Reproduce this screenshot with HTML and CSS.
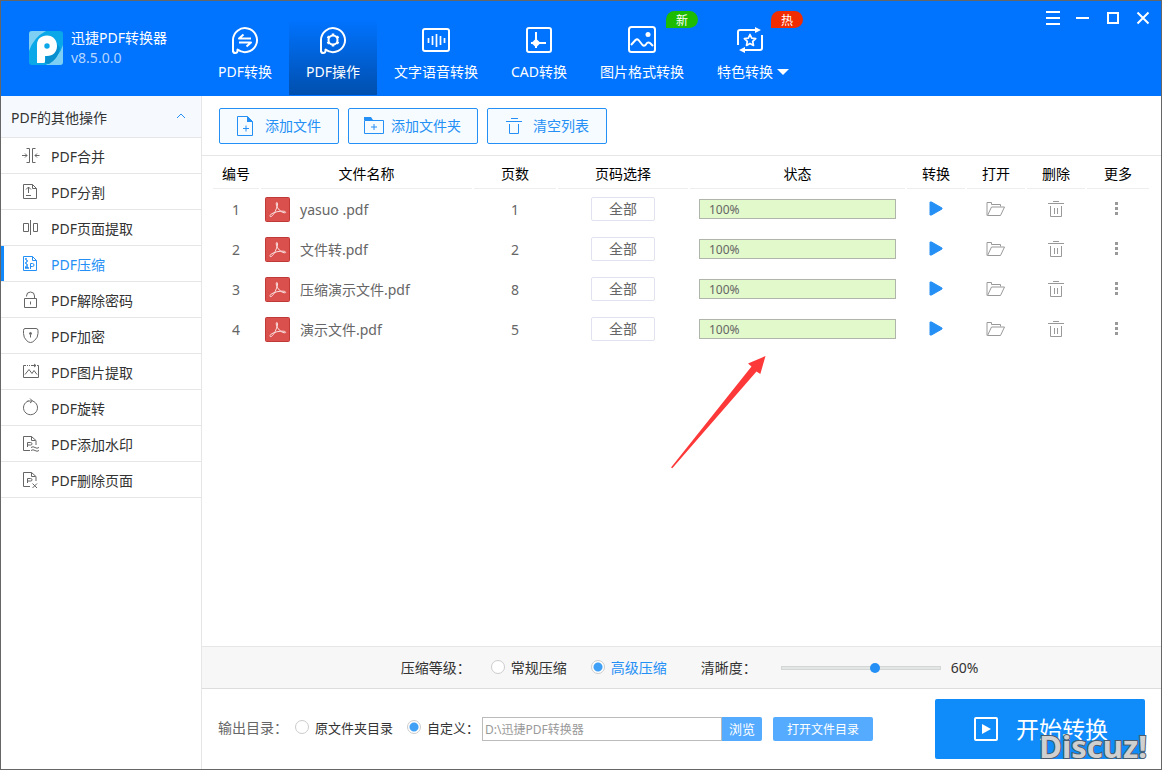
FILE: index.html
```html
<!DOCTYPE html>
<html lang="zh-CN">
<head>
<meta charset="utf-8">
<title>迅捷PDF转换器</title>
<link rel="stylesheet" href="styles.css">
</head>
<body>
<svg class="defs" aria-hidden="true">
  <symbol id="pdf" viewBox="0 0 25 25">
    <rect x=".5" y=".5" width="24" height="24" rx="1" fill="#d9504c" stroke="#c23a38"/>
    <path d="M11.300 5.800c.8-1 1.500.2 1.100 2.200-.7 3.800-3.300 9.600-5.800 11.300-1.700 1-2.400-.4-.7-2 2.700-2.200 9.500-3.600 13-3.100 2.600.5 2.100 1.900.2 1.600-3.300-.6-6.800-4.200-7.700-7.500-.2-1-.2-1.900-.1-2.500z" fill="none" stroke="#fbe3e2"/>
  </symbol>
  <symbol id="play" viewBox="0 0 14 15"><path d="M1 1v13h1.500L13 8V7L2.500 1z" fill="#2490f5" stroke="#2490f5" stroke-linejoin="round"/></symbol>
  <symbol id="folder" viewBox="0 0 19 15"><path d="M1 14.500v-13h4.500v2h9v2M1.500 14.500l4-8.500h13l-4 8.500z" fill="none" stroke="#999"/></symbol>
  <symbol id="trash" viewBox="0 0 16 16"><path d="M5 .5h6M0 2.500h16M2.500 5v10.500h11V5M6.500 7v6M9.500 7v6" fill="none" stroke="#999"/></symbol>
  <symbol id="dots" viewBox="0 0 3 13"><path d="M0 0h3v3H0zM0 5h3v3H0zM0 10h3v3H0z" fill="#999"/></symbol>
</svg>
<div class="app">
  <header class="header">
    <div class="brand">
      <svg class="logo" viewBox="0 0 34 34">
        <rect width="34" height="34" rx="3" fill="#0aa8e8"/>
        <path d="M0 20V3a3 3 0 0 1 3-3h14Q5 6 0 20zM34 14v17a3 3 0 0 1-3 3H17Q30 27 34 14z" fill="#7dd0f4"/>
        <path d="M16 32l1-7q10-2 11-12l3 4q-2 11-11 16z" fill="#078fcf"/>
        <path fill-rule="evenodd" d="M8 32V14C8 8 12 4.500 18 4.500S28 9 28 15s-4 10-10 10h-2v5.500q0 1.500-1.500 1.500zM18 12.300a2.700 2.700 0 1 0 0 5.400 2.700 2.700 0 0 0 0-5.400z" fill="#fff"/>
      </svg>
      <div class="brand-text"><span>迅捷PDF转换器</span><span class="version">v8.5.0.0</span></div>
    </div>
    <nav class="nav">
      <button class="tab">
        <svg viewBox="0 0 28 28"><path d="M2 26V14A12 12 0 1 1 6.500 23.500V25q-.2 2-2.200 2T2 25"/><path d="M12.500 8.500L8 12.500h12M8 16.500h12l-4.500 4"/></svg>
        <span>PDF转换</span></button>
      <button class="tab active">
        <svg viewBox="0 0 28 28"><path d="M2 26V14A12 12 0 1 1 6.500 23.500V25q-.2 2-2.200 2T2 25"/><circle cx="14" cy="14" r="4.500"/><path d="M14 7.500v2M14 18.500v2M8.400 10.700l1.700 1M17.900 16.300l1.700 1M8.400 17.300l1.700-1M17.900 11.700l1.700-1" stroke-width="2.500"/></svg>
        <span>PDF操作</span></button>
      <button class="tab">
        <svg viewBox="0 0 28 28"><rect x="1" y="3" width="26" height="22" rx="2"/><path d="M6.500 12v5M10.500 10v9M14.500 8v13M18.500 10v9M22.500 12v5" stroke-width="1.700"/></svg>
        <span>文字语音转换</span></button>
      <button class="tab">
        <svg viewBox="0 0 28 28"><rect x="2" y="2" width="24" height="24" rx="2"/><path d="M11 6v16M6 17h15"/><path d="M11 12.500l4.500 4.500-4.500 4.500L6.500 17z" fill="#fff" stroke="none"/></svg>
        <span>CAD转换</span></button>
      <button class="tab">
        <svg viewBox="0 0 28 28"><rect x="1" y="1" width="26" height="25" rx="2.500"/><path d="M3 19l4.500-5q1.500-1.200 3 0l4 5q1.500 1.500 3 0l1.500-2q1.500-1 3 0l3 3"/><circle cx="20" cy="8.500" r="2.500" fill="#fff" stroke="none"/></svg>
        <span>图片格式转换</span><b class="badge new">新</b></button>
      <button class="tab special">
        <svg viewBox="0 0 28 28"><path d="M2 19V6q0-2 2-2h16M26 9v13q0 2-2 2H8"/><path d="M19 1l6 3-6 3zM9 21l-6 3 6 3z" fill="#fff" stroke="none"/><path d="M14 8.500l1.700 3.700 4 .5-3 2.700.8 4-3.500-2-3.500 2 .8-4-3-2.700 4-.5z" stroke-width="1.700"/></svg>
        <span>特色转换<i class="caret"></i></span><b class="badge hot">热</b></button>
    </nav>
    <div class="window-controls">
      <button aria-label="菜单"><svg viewBox="0 0 14 14"><path d="M0 1h14M0 7h14M0 13h14"/></svg></button>
      <button aria-label="最小化"><svg viewBox="0 0 14 14"><path d="M0 7h13"/></svg></button>
      <button aria-label="最大化"><svg viewBox="0 0 14 14"><path d="M2 2h10v10H2z"/></svg></button>
      <button aria-label="关闭"><svg viewBox="0 0 14 14"><path d="M1.500 1.500l11 11M12.500 1.500l-11 11"/></svg></button>
    </div>
  </header>
  <div class="content">
    <aside class="sidebar">
      <button class="side-head"><span>PDF的其他操作</span><svg viewBox="0 0 10 6"><path d="M1 5l4-4 4 4"/></svg></button>
      <nav class="side-list">
        <button><svg viewBox="0 0 18 18"><path d="M0 8.500h5M3 6.500l2 2-2 2M4.500 1.500h3v14h-3M13.500 1.500h-3v14h3M17.500 8.500H13M15 6.500l-2 2 2 2"/></svg>PDF合并</button>
        <button><svg viewBox="0 0 18 18"><path d="M1.500 1.500h9l4 4v10h-13zM10.500 1.500v4h4M6.500 4v6M4 6.500L6.500 4 9 6.500M4 12.500h5"/></svg>PDF分割</button>
        <button><svg viewBox="0 0 18 18"><path d="M1.500 4.500h5v8h-5zM8.500 1v15M11.500 4.500h4v8h-4z"/></svg>PDF页面提取</button>
        <button class="active"><svg viewBox="0 0 18 18"><path d="M1.500 1.500h9l4 4v10h-13zM10.500 1.500v4h4M8.500 14V8.500h2q1.500 0 1.500 1.500t-1.500 1.500h-2"/><path d="M3 4h2M4 6h2M3 8h2M4 10h2M3 12h3M3 13h4" stroke-width="1.300"/></svg>PDF压缩</button>
        <button><svg viewBox="0 0 18 18"><path d="M2.500 7.500h12v9h-12zM4.500 5.500V5q0-4 4-4t4 4v2.500M8.500 10.500v3"/></svg>PDF解除密码</button>
        <button><svg viewBox="0 0 18 18"><path d="M3 1.500h11q2 0 2 2v3q0 4-3.500 7-2 2-4 2t-4-2Q1.500 10.500 1.500 6.500v-3q0-2 1.500-2z"/><path d="M8.500 8v2.500"/><circle cx="8.500" cy="6.500" r="1" fill="currentColor"/></svg>PDF加密</button>
        <button><svg viewBox="0 0 18 18"><path d="M4 2.500H1.500v12h15v-12H15M3 11.500l4-5 3 4 2-3 3 4"/><path d="M5 2.500h5" stroke-dasharray="1 1"/><path d="M10 2.500h4M12 1l2 1.500L12 4"/></svg>PDF图片提取</button>
        <button><svg viewBox="0 0 18 18"><path d="M10.500 2a7 7 0 1 1-4 0M5.500 2H10M8-.5L10.500 2 8 4"/></svg>PDF旋转</button>
        <button><svg viewBox="0 0 18 18"><path d="M8 15.500H1.500v-14h8l4.500 4V10M9.500 1.500v4h4M5.500 12V7.500h3q1.500 0 1.500 1.300T8.500 10h-3M9 12.500q2-1.500 4 0t4 0M9 15.500q2-1.500 4 0t4 0"/></svg>PDF添加水印</button>
        <button><svg viewBox="0 0 18 18"><path d="M8 15.500H1.500v-14h8l4.500 4V10M9.500 1.500v4h4M5.500 12V7.500h3q1.500 0 1.500 1.300T8.500 10h-3M10.500 12.500l4.500 4.500M15 12.500L10.500 17"/></svg>PDF删除页面</button>
      </nav>
    </aside>
    <main class="main">
      <div class="toolbar">
        <button><svg viewBox="0 0 22 22"><path d="M2.500 1.500h10l5 5v14h-15zM11 10.500v6M8 13.500h6"/><path d="M12 1l6 6h-6z" fill="#2490f5" stroke="none"/></svg><span>添加文件</span></button>
        <button class="wide"><svg viewBox="0 0 22 22"><path d="M1.500 5.500h19v13h-19zM11 9v6M8 12h6"/><path d="M1 2h7l2 3H1z" fill="#2490f5" stroke="none"/></svg><span>添加文件夹</span></button>
        <button><svg viewBox="0 0 22 22"><path d="M8 3.500h7M3 6.500h16"/><path d="M6.500 9v9.500h9V9"/></svg><span>清空列表</span></button>
      </div>
      <div class="files">
        <table>
          <colgroup><col class="c-no"><col class="c-name"><col class="c-count"><col class="c-pages"><col><col class="c-act"><col class="c-act"><col class="c-act"><col class="c-more"></colgroup>
          <thead><tr><th>编号</th><th>文件名称</th><th>页数</th><th>页码选择</th><th>状态</th><th>转换</th><th>打开</th><th>删除</th><th>更多</th></tr></thead>
          <tbody>
            <tr><td>1</td><td><div class="file"><svg><use href="#pdf"/></svg><span>yasuo .pdf</span></div></td><td>1</td><td><button class="all">全部</button></td><td><div class="status">100%</div></td><td><button class="act" aria-label="转换"><svg class="i-play"><use href="#play"/></svg></button></td><td><button class="act" aria-label="打开"><svg class="i-folder"><use href="#folder"/></svg></button></td><td><button class="act" aria-label="删除"><svg class="i-trash"><use href="#trash"/></svg></button></td><td><button class="act more" aria-label="更多"><svg class="i-dots"><use href="#dots"/></svg></button></td></tr>
            <tr><td>2</td><td><div class="file"><svg><use href="#pdf"/></svg><span>文件转.pdf</span></div></td><td>2</td><td><button class="all">全部</button></td><td><div class="status">100%</div></td><td><button class="act" aria-label="转换"><svg class="i-play"><use href="#play"/></svg></button></td><td><button class="act" aria-label="打开"><svg class="i-folder"><use href="#folder"/></svg></button></td><td><button class="act" aria-label="删除"><svg class="i-trash"><use href="#trash"/></svg></button></td><td><button class="act more" aria-label="更多"><svg class="i-dots"><use href="#dots"/></svg></button></td></tr>
            <tr><td>3</td><td><div class="file"><svg><use href="#pdf"/></svg><span>压缩演示文件.pdf</span></div></td><td>8</td><td><button class="all">全部</button></td><td><div class="status">100%</div></td><td><button class="act" aria-label="转换"><svg class="i-play"><use href="#play"/></svg></button></td><td><button class="act" aria-label="打开"><svg class="i-folder"><use href="#folder"/></svg></button></td><td><button class="act" aria-label="删除"><svg class="i-trash"><use href="#trash"/></svg></button></td><td><button class="act more" aria-label="更多"><svg class="i-dots"><use href="#dots"/></svg></button></td></tr>
            <tr><td>4</td><td><div class="file"><svg><use href="#pdf"/></svg><span>演示文件.pdf</span></div></td><td>5</td><td><button class="all">全部</button></td><td><div class="status">100%</div></td><td><button class="act" aria-label="转换"><svg class="i-play"><use href="#play"/></svg></button></td><td><button class="act" aria-label="打开"><svg class="i-folder"><use href="#folder"/></svg></button></td><td><button class="act" aria-label="删除"><svg class="i-trash"><use href="#trash"/></svg></button></td><td><button class="act more" aria-label="更多"><svg class="i-dots"><use href="#dots"/></svg></button></td></tr>
          </tbody>
        </table>
        <svg class="pointer" viewBox="0 0 96 116" aria-hidden="true"><path d="M94.500 1L77 8.500l3.500 3L0 112.500l1.300.7L85.500 16.500l3.800 2.500z" fill="#fd3838"/></svg>
      </div>
      <div class="options">
        <span class="level">压缩等级：</span>
        <label class="radio"><input type="radio" name="level">常规压缩</label>
        <label class="radio on"><input type="radio" name="level" checked>高级压缩</label>
        <label class="clarity" for="clarity">清晰度：</label>
        <input class="slider" id="clarity" type="range" min="0" max="100" value="60">
        <output for="clarity">60%</output>
      </div>
      <footer class="output">
        <span class="out-label">输出目录：</span>
        <label class="radio small"><input type="radio" name="dir">原文件夹目录</label>
        <label class="radio small"><input type="radio" name="dir" checked>自定义：</label>
        <input class="path" type="text" aria-label="自定义目录" value="D:\迅捷PDF转换器">
        <button class="browse">浏览</button>
        <button class="open-dir">打开文件目录</button>
        <button class="start"><svg viewBox="0 0 24 24"><rect x="1" y="1" width="22" height="22" rx="1" fill="none" stroke="#fff" stroke-width="2"/><path d="M8 7v10l9-5z" fill="#fff"/></svg><span>开始转换</span></button>
        <span class="watermark">Discuz!</span>
      </footer>
    </main>
  </div>
</div>
</body>
</html>
```
FILE: styles.css
```css
* { box-sizing: border-box; }
body {
  margin: 0;
  font: 14px/20px "Noto Sans", "Noto Sans CJK SC", sans-serif;
  color: #333;
}
button, input { font: inherit; color: inherit; margin: 0; }
button { border: 0; padding: 0; background: none; cursor: pointer; white-space: nowrap; }
svg { display: block; flex: none; }
.defs { position: absolute; width: 0; height: 0; }
.app {
  display: flex;
  flex-direction: column;
  min-height: 100vh;
  border: 1px solid #666;
  background: #fff;
}

.header { display: flex; height: 95px; background: #0073ff; color: #fff; flex: none; }
.brand { display: flex; align-items: center; gap: 8px; width: 201px; padding: 0 0 2px 28px; }
.logo { width: 34px; height: 34px; }
.brand-text { display: flex; flex-direction: column; }
.version { color: #b5d6ff; }
.nav { display: flex; gap: 1px; }
.tab {
  position: relative;
  display: flex;
  flex-direction: column;
  align-items: center;
  gap: 8px;
  padding: 25px 16px 0;
  height: 94px;
}
.tab.active { padding-left: 17px; padding-right: 17px; background: linear-gradient(#0073ff 20%, #004fae); }
.tab svg { width: 28px; height: 28px; fill: none; stroke: #fff; stroke-width: 2; stroke-linejoin: round; }
.tab.special { align-items: flex-start; }
.tab.special svg { margin-left: 19px; }
.caret {
  display: inline-block;
  margin-left: 4px;
  vertical-align: 2px;
  border: 6px solid transparent;
  border-top-color: #fff;
  border-bottom: 0;
}
.badge {
  position: absolute;
  top: 10px;
  right: 2px;
  width: 32px;
  border-radius: 9px 9px 9px 0;
  font: 12px/17px "Noto Sans CJK SC", sans-serif;
}
.new { background: #1dbc00; }
.hot { background: #f12c00; }
.window-controls { display: flex; margin-left: auto; padding-right: 3px; }
.window-controls button { display: grid; place-items: center; width: 30px; height: 34px; }
.window-controls svg { width: 14px; height: 14px; fill: none; stroke: #fff; stroke-width: 2; }

.content { display: flex; flex: 1; }
.sidebar { width: 201px; flex: none; border-right: 1px solid #e6e6e6; }
.side-head {
  display: flex;
  align-items: center;
  justify-content: space-between;
  width: 100%;
  height: 42px;
  padding: 2px 15px 0 10px;
  background: #f6faff;
  border-bottom: 1px solid #e6e6e6;
}
.side-head svg { width: 10px; height: 6px; margin-bottom: 4px; fill: none; stroke: #2490f5; }
.side-list button {
  display: flex;
  align-items: center;
  gap: 11px;
  width: 100%;
  height: 36px;
  padding: 2px 0 0 21px;
  border-bottom: 1px solid #e6e6e6;
}
.side-list svg { width: 18px; height: 18px; margin-bottom: 2px; fill: none; stroke: currentColor; color: #666; overflow: visible; }
.side-list .active { color: #2490f5; box-shadow: inset 3px 0 #1088fa; }
.side-list .active svg { color: #2490f5; }

.main { display: flex; flex-direction: column; flex: 1; min-width: 0; }
.toolbar { display: flex; gap: 9px; height: 60px; padding: 12px 17px; border-bottom: 1px solid #e6e6e6; }
.toolbar button {
  display: flex;
  align-items: center;
  gap: 8px;
  width: 120px;
  height: 36px;
  padding-left: 15px;
  border: 1px solid #2490f5;
  border-radius: 2px;
  background: #f6fbff;
  color: #2490f5;
}
.toolbar .wide { width: 130px; gap: 6px; padding-left: 14px; }
.toolbar svg { width: 22px; height: 22px; fill: none; stroke: #2490f5; }

.files { position: relative; flex: 1; padding: 0 10px 0 9px; }
table { width: 100%; table-layout: fixed; border-collapse: separate; border-spacing: 2px 0; color: #666; }
.c-no { width: 46px; }
.c-name { width: 211px; }
.c-count { width: 82px; }
.c-pages { width: 130px; }
.c-act { width: 58px; }
.c-more { width: 62px; }
th { height: 33px; padding: 4px 0 0; border-bottom: 1px solid #eee; font-weight: 400; color: #000; }
td { height: 40px; padding: 2px 0 0; text-align: center; }
.file { display: flex; align-items: center; gap: 10px; padding-left: 4px; }
.file svg { width: 25px; height: 25px; margin-bottom: 2px; }
.all { display: block; width: 64px; height: 24px; margin: 0 auto 2px; border: 1px solid #e0e2f0; border-radius: 2px; line-height: 20px; }
.status {
  height: 20px;
  margin: 0 9px 2px;
  padding-left: 9px;
  border: 1px solid #b0b5ab;
  background: #e2f9cc;
  text-align: left;
  font-size: 12px;
  line-height: 19px;
}
.act { display: grid; place-items: center; width: 100%; height: 24px; padding: 0 1px 0 0; margin-bottom: 3px; }
.act.more { padding-right: 3px; }
.i-play { width: 14px; height: 15px; }
.i-folder { width: 19px; height: 15px; }
.i-trash { width: 16px; height: 16px; }
.i-dots { width: 3px; height: 13px; }
.pointer { position: absolute; left: 469px; top: 199px; width: 96px; height: 116px; }

.options {
  display: flex;
  align-items: center;
  justify-content: center;
  height: 43px;
  padding-left: 16px;
  background: #f7f7f7;
  border-top: 1px solid #e6e6e6;
  border-bottom: 1px solid #ddd;
}
.level { margin-right: 20px; }
.radio { display: flex; align-items: center; gap: 6px; white-space: nowrap; }
.radio.on { margin: 0 34px 0 24px; color: #2490f5; }
.radio input {
  appearance: none;
  width: 14px;
  height: 14px;
  margin-bottom: 2px;
  border: 1px solid #ccc;
  border-radius: 50%;
  background: #fff;
}
.radio input:checked { background: radial-gradient(circle, #3fa0f5 0 4px, #fff 5px); }
.clarity { margin-right: 24px; }
.slider { appearance: none; width: 160px; height: 12px; background: none; }
.slider::-webkit-slider-runnable-track { height: 4px; border: 1px solid #d3d6d5; background: #e2e6e5; }
.slider::-webkit-slider-thumb {
  appearance: none;
  width: 10px;
  height: 10px;
  margin-top: -4px;
  border-radius: 50%;
  background: #2490f5;
}
.options output { margin-left: 10px; }

.output { position: relative; display: flex; align-items: center; height: 80px; padding: 0 16px; white-space: nowrap; }
.out-label { margin: 0 7px 2px 0; color: #666; }
.small { margin: 0 14px 2px 0; font-size: 13px; }
.small + .small { margin-right: 3px; }
.path {
  flex: 0 1 240px;
  min-width: 80px;
  height: 24px;
  padding: 0 2px;
  border: 1px solid #bbb;
  font-size: 12px;
  color: #999;
}
.browse, .open-dir { height: 24px; border-radius: 0 2px 2px 0; background: #55abff; color: #fff; }
.browse { width: 40px; font-size: 13px; }
.open-dir { width: 100px; margin-left: 11px; padding-top: 2px; border-radius: 2px; font-size: 12px; }
.start {
  display: flex;
  align-items: center;
  justify-content: center;
  gap: 18px;
  width: 210px;
  height: 60px;
  margin-left: auto;
  padding-left: 2px;
  border-radius: 2px;
  background: #108cfa;
  color: #fff;
  font-size: 23px;
}
.start svg { width: 24px; height: 24px; }
.watermark {
  position: absolute;
  right: 14px;
  bottom: 7px;
  font: bold 31px/32px "Noto Sans", sans-serif;
  color: #d0d0d0;
  -webkit-text-stroke: 2px #4c5c6c;
  paint-order: stroke fill;
  pointer-events: none;
}
```
